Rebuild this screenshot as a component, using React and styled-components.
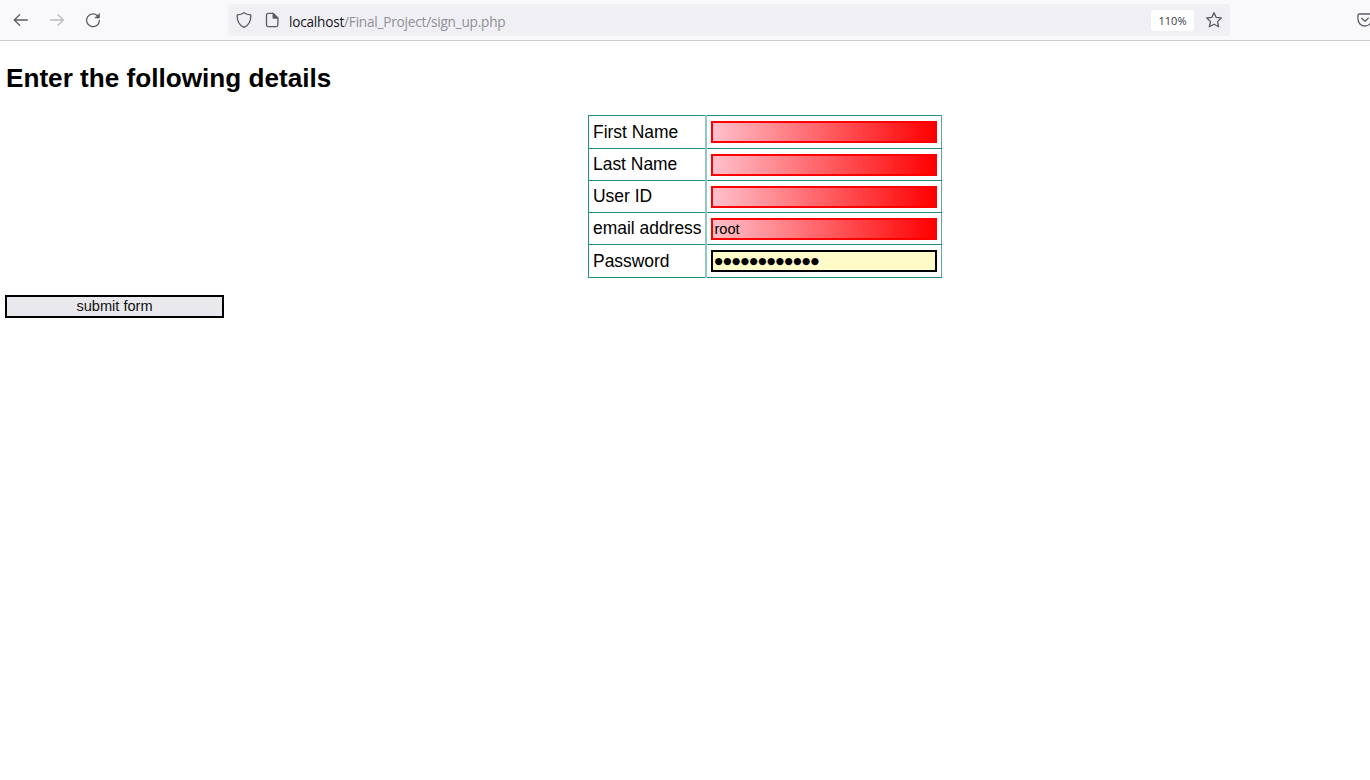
import React from "react";
import styled, { createGlobalStyle } from "styled-components";

const GlobalStyle = createGlobalStyle`
  * { box-sizing: border-box; }
  body { margin: 0; background: #fff; color: #000; font-family: "Liberation Sans", Arial, sans-serif; overflow: hidden; }
`;

const Toolbar = styled.header`
  display: flex;
  align-items: center;
  height: 41px;
  width: 1370px;
  overflow: hidden;
  background: #f9f9fb;
  border-bottom: 1px solid #cccccf;
`;

const Navigation = styled.nav`
  display: flex;
  flex: none;
  gap: 20px;
  padding-left: 13px;
  width: 228px;
`;

const Icon = styled.svg`
  display: block;
  flex: none;
  width: 16px;
  height: 16px;
  fill: none;
  stroke: ${(p) => p.$color || "#5b5b66"};
  stroke-width: 1.3;
  stroke-linecap: round;
  stroke-linejoin: round;
`;

const AddressBar = styled.div`
  display: flex;
  flex: none;
  align-items: center;
  gap: 12px;
  width: 1002px;
  height: 32px;
  padding: 0 8px;
  border-radius: 4px;
  background: #f0f0f4;
`;

const Url = styled.span`
  flex: 1;
  margin-left: -3px;
  padding-top: 3px;
  font: 13.6px/20px "Open Sans", sans-serif;
  letter-spacing: -0.21px;
  color: #8f8f96;
`;

const Host = styled.span`
  color: #15141a;
`;

const Zoom = styled.span`
  width: 43px;
  height: 21px;
  border-radius: 3px;
  background: #fff;
  color: #3a3944;
  text-align: center;
  font: 11px/22px "Open Sans", sans-serif;
`;

const Pocket = styled.div`
  flex: none;
  margin-left: 127px;
`;

const Page = styled.main`
  padding: 22px 6px 0;
`;

const Heading = styled.h1`
  margin: 0 0 21px;
  font-size: 26.15px;
  line-height: 31px;
`;

const DetailsTable = styled.table`
  width: 354px;
  margin-left: 582px;
  border-collapse: collapse;
  table-layout: fixed;
`;

const Row = styled.tr`
  height: ${(p) => p.$height}px;
`;

const Label = styled.th`
  width: 117px;
  padding: 0 0 1px 4px;
  border: 1px solid #1f8e8b;
  border-right: 2px solid #8fc8c6;
  font-size: 17.45px;
  font-weight: normal;
  line-height: 20px;
  text-align: left;
  white-space: nowrap;
`;

const Cell = styled.td`
  padding: 0 4px;
  border: 1px solid #1f8e8b;
  border-left: 2px solid #8fc8c6;
  border-right-color: #55aaa7;
`;

const Field = styled.div`
  display: flex;
  align-items: center;
  height: 22px;
  width: 226px;
  padding-left: 2px;
  border: 2px solid ${(p) => (p.$secret ? "#000" : "#f00")};
  background: ${(p) => (p.$secret ? "#fffbc8" : "linear-gradient(to right, pink, red)")};
  font-size: 14.6px;
  line-height: 18px;
`;

const Mask = styled.span`
  font: 9.5px/18px "DejaVu Sans", sans-serif;
  letter-spacing: 0.45px;
`;

const SubmitButton = styled.button`
  display: block;
  width: 219px;
  height: 23px;
  margin: 17px 0 0 -1px;
  padding: 0 0 1px;
  border: 2px solid #000;
  background: #e9e9ed;
  color: #111;
  font: 14.6px/18px "Liberation Sans", Arial, sans-serif;
`;

const rows = [
  { label: "First Name", height: 33 },
  { label: "Last Name", height: 32 },
  { label: "User ID", height: 32 },
  { label: "email address", value: "root", height: 32 },
  { label: "Password", secret: true, height: 33 },
];

export default function App() {
  return (
    <>
      <GlobalStyle />
      <Toolbar>
        <Navigation>
          <Icon viewBox="0 0 16 16"><path d="M14.3 8H1.4M6.6 2.7 1.3 8l5.3 5.3" /></Icon>
          <Icon viewBox="0 0 16 16" $color="#bcbcc1"><path d="M1.4 8h12.9M9.1 2.7 14.4 8l-5.3 5.3" /></Icon>
          <Icon viewBox="0 0 16 16">
            <path d="M13.1 4.4A6.4 6.4 0 1 0 14.4 8.4" />
            <path d="M14.4 1.7v4.2h-4.2z" fill="#5b5b66" strokeWidth=".7" />
          </Icon>
        </Navigation>
        <AddressBar>
          <Icon viewBox="0 0 16 16"><path d="M8 .7C6.2 2.1 3.7 2.7 1.2 2.9 1 8.8 3.2 13.3 8 15.3c4.8-2 7-6.5 6.8-12.4C12.3 2.7 9.8 2.1 8 .7Z" /></Icon>
          <Icon viewBox="0 0 16 16">
            <path d="M4 1.4h5.3l4.6 4.6v7.1a1.5 1.5 0 0 1-1.5 1.5H4a1.5 1.5 0 0 1-1.5-1.5V2.9A1.5 1.5 0 0 1 4 1.4Z" />
            <path d="M9.2 1.6v4.5h4.5z" fill="#5b5b66" />
          </Icon>
          <Url><Host>localhost</Host>/Final_Project/sign_up.php</Url>
          <Zoom>110%</Zoom>
          <Icon viewBox="0 0 16 16"><path d="m8 .7 2.2 4.7 5.1.6-3.8 3.6 1.1 5.1L8 12.2l-4.6 2.5 1.1-5.1L.7 6l5.1-.6Z" /></Icon>
        </AddressBar>
        <Pocket>
          <Icon viewBox="0 0 16 16">
            <path d="M2.4 2h11.2a1.5 1.5 0 0 1 1.5 1.5v3.4a7.1 7.1 0 0 1-14.2 0V3.5A1.5 1.5 0 0 1 2.4 2Z" />
            <path d="m4.7 6.2 3.3 3 3.3-3" />
          </Icon>
        </Pocket>
      </Toolbar>
      <Page>
        <Heading>Enter the following details</Heading>
        <DetailsTable>
          <tbody>
            {rows.map((row) => (
              <Row key={row.label} $height={row.height}>
                <Label scope="row">{row.label}</Label>
                <Cell>
                  <Field $secret={row.secret}>
                    {row.secret ? <Mask>{"●".repeat(12)}</Mask> : row.value}
                  </Field>
                </Cell>
              </Row>
            ))}
          </tbody>
        </DetailsTable>
        <SubmitButton type="button">submit form</SubmitButton>
      </Page>
    </>
  );
}
